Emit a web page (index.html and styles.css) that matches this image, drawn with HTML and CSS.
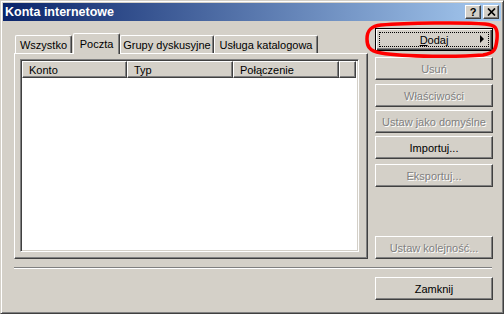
FILE: index.html
```html
<!DOCTYPE html>
<html lang="pl">

<head>
    <meta charset="UTF-8">
    <title>Konta internetowe</title>
    <link rel="stylesheet" href="styles.css">
</head>

<body>
    <div class="window">
        <div class="titlebar">
            <span class="title">Konta internetowe</span>
            <div class="title-buttons">
                <span class="tbtn">?</span>
                <span class="tbtn tbtn-close">
                    <svg width="9" height="8" viewBox="0 0 9 8"><path d="M1 0.5 L8 7.5 M8 0.5 L1 7.5" stroke="#000" stroke-width="1.7" /></svg>
                </span>
            </div>
        </div>

        <div class="main">
            <div class="left">
                <div class="tabs">
                    <div class="tab tab-all">Wszystko</div>
                    <div class="tab tab-mail active">Poczta</div>
                    <div class="tab tab-news">Grupy dyskusyjne</div>
                    <div class="tab tab-dir">Usługa katalogowa</div>
                </div>
                <div class="panel">
                    <div class="list">
                        <div class="list-header">
                            <div class="col col-konto">Konto</div>
                            <div class="col col-typ">Typ</div>
                            <div class="col col-conn">Połączenie</div>
                            <div class="col col-rest"></div>
                        </div>
                    </div>
                </div>
            </div>

            <div class="right">
                <div class="btn btn-default"><span><u>D</u>odaj</span><span class="arrow"></span></div>
                <div class="btn disabled b-usun">Usuń</div>
                <div class="btn disabled b-wlasc">Właściwości</div>
                <div class="btn disabled b-dom">Ustaw jako domyślne</div>
                <div class="btn b-imp">Importuj...</div>
                <div class="btn disabled b-eks">Eksportuj...</div>
                <div class="btn disabled b-kol">Ustaw kolejność...</div>
            </div>
        </div>

        <div class="separator"></div>

        <div class="bottom">
            <div class="btn">Zamknij</div>
        </div>

        <!-- czerwona obwódka wokół przycisku Dodaj -->
        <svg class="mark" width="136" height="40" viewBox="0 0 136 40">
            <path d="M16 4 C40 2 100 1 120 3 C130 4 133 6 132 18 C131 28 130 32 118 34 C95 36 40 36 16 32 C3 30 2 24 2 18 C2 9 6 5 16 4 Z"
                fill="none" stroke="#ff0000" stroke-width="3.5" />
        </svg>
    </div>
</body>

</html>
```

FILE: styles.css
```css
body {
    margin: 0;
    background-color: #d4d0c8;
}

.window {
    position: relative;
    width: 504px;
    height: 314px;
    box-sizing: border-box;
    padding: 2px;
    border: 1px solid;
    border-color: #d4d0c8 #404040 #404040 #d4d0c8;
    box-shadow: inset 1px 1px #fff, inset -1px -1px #808080;
    background-color: #d4d0c8;
    font-family: "Liberation Sans", Arial, sans-serif;
    font-size: 11px;
    color: #000;
}

.titlebar {
    display: flex;
    align-items: center;
    justify-content: space-between;
    height: 18px;
    padding: 0 2px;
    background: linear-gradient(to right, #0a246a, #a6caf0);
    color: #fff;
    font-weight: bold;
}

.title {
    font-size: 12.5px;
}

.title-buttons {
    display: flex;
    gap: 2px;
}

.tbtn {
    display: flex;
    align-items: center;
    justify-content: center;
    width: 16px;
    height: 14px;
    box-sizing: border-box;
    border: 1px solid;
    border-color: #fff #404040 #404040 #fff;
    box-shadow: inset -1px -1px #808080;
    background-color: #d4d0c8;
    color: #000;
    font-size: 11px;
    font-weight: bold;
}

.main {
    display: flex;
    padding-top: 7px;
}

.left {
    width: 354px;
    margin-left: 11px;
    margin-top: 5px;
}

.tabs {
    display: flex;
    align-items: flex-end;
    height: 21px;
    margin-left: 1px;
    margin-bottom: -1px;
    position: relative;
    z-index: 1;
}

.tab {
    height: 18px;
    box-sizing: border-box;
    border-top: 1px solid #fff;
    border-left: 1px solid #fff;
    border-right: 1px solid #404040;
    border-radius: 2px 2px 0 0;
    box-shadow: inset -1px 0 #808080;
    padding-top: 3px;
    text-align: center;
    white-space: nowrap;
    margin-bottom: 1px;
}

.tab-all { width: 57px; }
.tab-mail { width: 47px; margin-left: 1px; }
.tab-news { width: 94px; }
.tab-dir { width: 104px; }

.tab.active {
    height: 21px;
    margin-bottom: 0;
    padding-top: 4px;
    background-color: #d4d0c8;
}

.panel {
    height: 206px;
    box-sizing: border-box;
    padding: 5px 8px 6px 5px;
    border: 1px solid;
    border-color: #fff #404040 #404040 #fff;
    box-shadow: inset -1px -1px #808080;
}

.list {
    height: 100%;
    box-sizing: border-box;
    padding: 2px;
    background-color: #fff;
    border: 1px solid;
    border-color: #808080 #fff #fff #808080;
    box-shadow: inset 1px 1px #404040, inset -1px -1px #d4d0c8;
}

.list-header {
    display: flex;
    height: 17px;
    margin: -1px 0 0 -1px;
}

.col {
    height: 17px;
    box-sizing: border-box;
    padding: 2px 0 0 6px;
    border: 1px solid;
    border-color: #fff #404040 #404040 #fff;
    box-shadow: inset -1px -1px #808080;
    background-color: #d4d0c8;
}

.col-konto { width: 105px; }
.col-typ { width: 106px; }
.col-conn { width: 106px; }
.col-rest { flex: 1; }

.right {
    display: flex;
    flex-direction: column;
    width: 118px;
    height: 231px;
    margin-left: 7px;
}

.btn {
    position: relative;
    display: flex;
    align-items: center;
    justify-content: center;
    width: 118px;
    height: 23px;
    box-sizing: border-box;
    border: 1px solid;
    border-color: #fff #404040 #404040 #fff;
    box-shadow: inset -1px -1px #808080;
    background-color: #d4d0c8;
    color: #000;
}

.btn.disabled {
    color: #808080;
    text-shadow: 1px 1px #fff;
}

.btn-default {
    border-color: #000;
    box-shadow: inset 1px 1px #fff, inset -1px -1px #404040, inset -2px -2px #808080;
}

.btn-default::after {
    content: "";
    position: absolute;
    top: 3px;
    left: 3px;
    right: 3px;
    bottom: 3px;
    border: 1px dotted #000;
}

.arrow {
    position: absolute;
    right: 8px;
    top: 6px;
    border-left: 4px solid #000;
    border-top: 4px solid transparent;
    border-bottom: 4px solid transparent;
}

.b-usun { margin-top: 6px; }
.b-wlasc { margin-top: 4px; }
.b-dom { margin-top: 3px; }
.b-imp { margin-top: 3px; }
.b-eks { margin-top: 5px; }
.b-kol { margin-top: auto; }

.separator {
    height: 0;
    margin: 8px 9px 0 11px;
    border-top: 1px solid #808080;
    border-bottom: 1px solid #fff;
}

.bottom {
    display: flex;
    justify-content: flex-end;
    margin-top: 8px;
    margin-right: 8px;
}

.mark {
    position: absolute;
    left: 364px;
    top: 20px;
}
```
